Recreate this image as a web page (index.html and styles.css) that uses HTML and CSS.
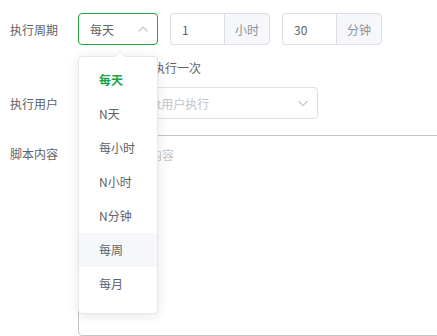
FILE: index.html
```html
<!DOCTYPE html>
<html lang="zh-CN">
<head>
    <meta charset="UTF-8">
    <title>定时任务</title>
    <link rel="stylesheet" href="styles.css">
</head>
<body>

<!-- Task form -->
<div class="form">
    <!-- Cycle -->
    <div class="row row-cycle">
        <div class="label">执行周期</div>
        <div class="field">
            <div class="select cycle-select is-open">
                <span class="select-text">每天</span>
                <svg class="arrow" width="12" height="12" viewBox="0 0 12 12"><path d="M1.5 8.5 6 4l4.5 4.5" fill="none" stroke="#c0c4cc" stroke-width="1.1"/></svg>
            </div>
            <div class="input-group">
                <input type="text" value="1">
                <span class="append">小时</span>
            </div>
            <div class="input-group">
                <input type="text" value="30">
                <span class="append">分钟</span>
            </div>
        </div>
    </div>

    <!-- Run once -->
    <div class="row row-once">
        <div class="label"></div>
        <label class="checkbox"><span class="box"></span>是否仅执行一次</label>
    </div>

    <!-- User -->
    <div class="row row-user">
        <div class="label">执行用户</div>
        <div class="select user-select">
            <span class="placeholder">默认使用root用户执行</span>
            <svg class="arrow" width="12" height="12" viewBox="0 0 12 12"><path d="M1.5 4 6 8.5 10.5 4" fill="none" stroke="#c0c4cc" stroke-width="1.1"/></svg>
        </div>
    </div>

    <!-- Script -->
    <div class="row row-script">
        <div class="label">脚本内容</div>
        <textarea placeholder="请输入脚本内容"></textarea>
    </div>
</div>

<!-- Cycle dropdown (open) -->
<div class="dropdown">
    <span class="popper-arrow"></span>
    <ul class="options">
        <li class="selected">每天</li>
        <li>N天</li>
        <li>每小时</li>
        <li>N小时</li>
        <li>N分钟</li>
        <li class="hover">每周</li>
        <li>每月</li>
        <li>N月</li>
    </ul>
</div>

</body>
</html>
```

FILE: styles.css
```css
body {
    margin: 0;
    font-family: "Noto Sans CJK SC", "Noto Sans", sans-serif;
    font-size: 12px;
    color: #606266;
    background-color: #fff;
    overflow: hidden;
    width: 437px;
    height: 336px;
    position: relative;
}
.form {
    padding-top: 13px;
}
.row {
    display: flex;
    align-items: center;
}
.label {
    width: 78px;
    padding-left: 10px;
    box-sizing: border-box;
    flex-shrink: 0;
}
.field {
    display: flex;
    align-items: center;
    gap: 12px;
}
.select {
    height: 32px;
    box-sizing: border-box;
    border: 1px solid #dcdfe6;
    border-radius: 4px;
    display: flex;
    align-items: center;
    justify-content: space-between;
    padding: 0 8px 0 11px;
    background-color: #fff;
    flex-shrink: 0;
}
.cycle-select {
    width: 80px;
}
.cycle-select.is-open {
    border-color: #22a33f;
}
.select-text {
    color: #606266;
}
.placeholder {
    color: #c0c4cc;
    white-space: nowrap;
}
.input-group {
    display: flex;
    width: 100px;
    height: 32px;
}
.input-group input {
    width: 54px;
    box-sizing: border-box;
    border: 1px solid #dcdfe6;
    border-right: none;
    border-radius: 4px 0 0 4px;
    padding: 0 11px;
    font-family: inherit;
    font-size: 12px;
    color: #606266;
    outline: none;
}
.append {
    width: 46px;
    box-sizing: border-box;
    border: 1px solid #dcdfe6;
    border-radius: 0 4px 4px 0;
    background-color: #f5f7fa;
    color: #909399;
    display: flex;
    align-items: center;
    justify-content: center;
}
.row-once {
    height: 20px;
    margin-top: 12px;
}
.checkbox {
    display: flex;
    align-items: center;
    color: #606266;
}
.checkbox .box {
    width: 14px;
    height: 14px;
    box-sizing: border-box;
    border: 1px solid #dcdfe6;
    border-radius: 2px;
    margin-right: 25px;
}
.row-user {
    margin-top: 10px;
}
.user-select {
    width: 240px;
}
.row-script {
    margin-top: 16px;
    align-items: flex-start;
}
.row-script .label {
    padding-top: 10px;
}
textarea {
    width: 420px;
    height: 201px;
    flex-shrink: 0;
    box-sizing: border-box;
    border: 1px solid #c0c4cc;
    border-radius: 4px;
    padding: 10px 11px;
    font-family: inherit;
    font-size: 12px;
    resize: none;
    outline: none;
}
textarea::placeholder {
    color: #c0c4cc;
}
.dropdown {
    position: absolute;
    left: 78px;
    top: 56px;
    width: 80px;
    height: 258px;
    box-sizing: border-box;
    border: 1px solid #e4e7ed;
    border-radius: 4px;
    background-color: #fff;
    box-shadow: 0 2px 12px rgba(0, 0, 0, 0.1);
}
.popper-arrow {
    position: absolute;
    left: 35px;
    top: -6px;
    width: 0;
    height: 0;
    border-left: 6px solid transparent;
    border-right: 6px solid transparent;
    border-bottom: 6px solid #e4e7ed;
}
.popper-arrow::after {
    content: "";
    position: absolute;
    left: -5px;
    top: 1px;
    border-left: 5px solid transparent;
    border-right: 5px solid transparent;
    border-bottom: 5px solid #fff;
}
.options {
    list-style: none;
    margin: 0;
    padding: 6px 0;
    height: 100%;
    box-sizing: border-box;
    overflow: hidden;
}
.options li {
    height: 34px;
    line-height: 34px;
    padding: 0 20px;
    color: #606266;
    white-space: nowrap;
}
.options li.selected {
    color: #22a33f;
    font-weight: bold;
}
.options li.hover {
    background-color: #f5f7fa;
}
```
